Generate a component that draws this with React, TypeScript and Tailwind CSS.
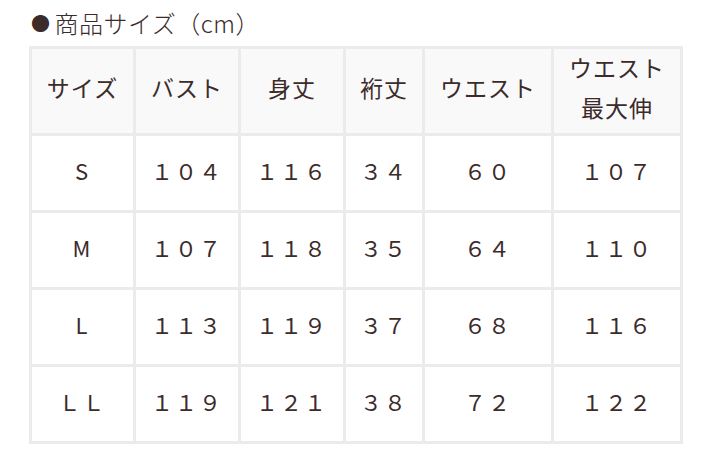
import React from "react";

const font = { fontFamily: '"Noto Sans CJK JP", "Noto Sans", sans-serif' };

const headers = ["サイズ", "バスト", "身丈", "裄丈", "ウエスト", "ウエスト\n最大伸"];

const rows = [
  ["S", "１０４", "１１６", "３４", "６０", "１０７"],
  ["M", "１０７", "１１８", "３５", "６４", "１１０"],
  ["L", "１１３", "１１９", "３７", "６８", "１１６"],
  ["ＬＬ", "１１９", "１２１", "３８", "７２", "１２２"],
];

export default function App() {
  return (
    <div className="w-[706px] h-[475px] bg-white text-[#3b2b2b]" style={font}>
      <div className="pl-[32px] pt-[6px] h-[46px] flex items-start text-[24px] leading-[34px] font-light tracking-[0.5px]">
        <span className="text-[19px] mr-[4px] -ml-[1px]">●</span>
        <span>商品サイズ（cm）</span>
      </div>

      <div className="ml-[29px] w-[654px] grid grid-cols-[101px_102px_102px_76px_126px_126px] grid-rows-[84px_74px_74px_74px_74px] gap-[3px] p-[3px] bg-[#ebebeb]">
        {headers.map(h => (
          <div
            key={h}
            className="bg-[#f9f9f9] flex items-center justify-center pb-[8px] text-center whitespace-pre-line text-[23px] leading-[40px] tracking-[1px]"
          >
            {h}
          </div>
        ))}

        {rows.map(r =>
          r.map((c, i) => (
            <div
              key={r[0] + i}
              className="bg-white flex items-center justify-center pb-[7px] text-[22px] leading-none tracking-[2px]"
            >
              {c}
            </div>
          ))
        )}
      </div>
    </div>
  );
}
